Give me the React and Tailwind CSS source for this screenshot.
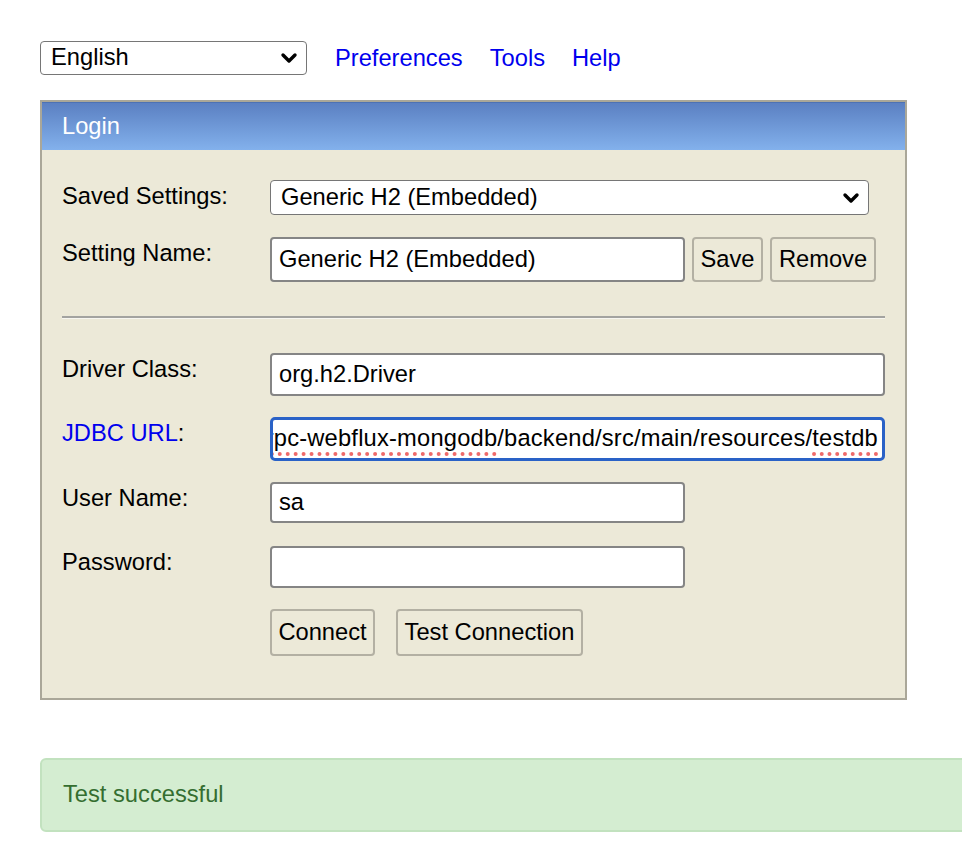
import React from "react";

const Chevron = () => (
  <svg width="18" height="12" viewBox="0 0 18 12" className="shrink-0">
    <path d="M3 3 L9 9 L15 3" fill="none" stroke="#000" strokeWidth="3.4" strokeLinecap="round" strokeLinejoin="round" />
  </svg>
);

const Select = ({ value, className }) => (
  <div
    className={`flex items-center justify-between bg-white border border-[#767676] rounded-[4px] pl-[10px] pr-[8px] ${className}`}
  >
    <span className="leading-none">{value}</span>
    <Chevron />
  </div>
);

const Input = ({ value, className }) => (
  <div
    className={`flex items-center bg-white border-2 border-[#858585] rounded-[4px] px-[7px] whitespace-nowrap overflow-hidden ${className}`}
  >
    {value}
  </div>
);

const Button = ({ children, className }) => (
  <div
    className={`flex items-center justify-center bg-[#ece9d8] border-2 border-[#b3b0a3] rounded-[4px] ${className}`}
  >
    {children}
  </div>
);

const Row = ({ label, children, className }) => (
  <div className={`flex ${className}`}>
    <div className="w-[228px] pl-[20px] pt-[3px] leading-[27px] shrink-0">{label}</div>
    <div className="flex gap-[7px]">{children}</div>
  </div>
);

export default function App() {
  return (
    <div
      className="w-[962px] h-[868px] overflow-hidden bg-white text-black text-[23.7px]"
      style={{ fontFamily: '"Liberation Sans", Arial, Helvetica, sans-serif' }}
    >
      <div className="pl-[40px] pt-[42px]">
        {/* top bar */}
        <div className="flex items-center h-[34px] -mt-[1px]">
          <Select value="English" className="w-[267px] h-[34px]" />
          <div className="flex gap-[27px] ml-[28px] pt-[2px] text-[#0000ee] leading-none">
            <span>Preferences</span>
            <span>Tools</span>
            <span>Help</span>
          </div>
        </div>

        {/* login panel */}
        <div className="mt-[25px] w-[867px] border-2 border-[#aaa799] bg-[#ece9d8]">
          <div className="h-[48px] flex items-center pl-[20px] text-white bg-linear-to-b from-[#5b80c2] to-[#83b1ec] border-t border-[#4d72b4]">
            Login
          </div>

          <div className="pt-[30px] pb-[42px]">
            <Row label="Saved Settings:">
              <Select value="Generic H2 (Embedded)" className="w-[599px] h-[35px]" />
            </Row>

            <Row label="Setting Name:" className="mt-[22px]">
              <Input value="Generic H2 (Embedded)" className="w-[415px] h-[45px]" />
              <Button className="w-[71px] h-[45px]">Save</Button>
              <Button className="w-[106px] h-[45px]">Remove</Button>
            </Row>

            <div className="mx-[20px] mt-[34px] border-t-2 border-[#a3a3a0] border-b border-b-[#f7f6f0]" />

            <Row label="Driver Class:" className="mt-[34px]">
              <Input value="org.h2.Driver" className="w-[615px] h-[43px]" />
            </Row>

            <Row
              label={
                <span>
                  <span className="text-[#0000ee]">JDBC URL</span>:
                </span>
              }
              className="mt-[21px]"
            >
              <div className="w-[615px] h-[44px] flex items-center justify-end bg-white border-[3px] border-[#2a62c7] rounded-[5px] pl-[2px] pr-[4px] whitespace-nowrap overflow-hidden tracking-[0.2px]">
                <span>
                  <span className="underline decoration-dotted decoration-[#ef6a6a] decoration-[4px] underline-offset-[6px]">
                    jdbc:h2:file:~/projects/spring-grpc-webflux-mongodb
                  </span>
                  /backend/src/main/resources/
                  <span className="underline decoration-dotted decoration-[#ef6a6a] decoration-[4px] underline-offset-[6px]">
                    testdb
                  </span>
                </span>
              </div>
            </Row>

            <Row label="User Name:" className="mt-[21px]">
              <Input value="sa" className="w-[415px] h-[41px]" />
            </Row>

            <Row label="Password:" className="mt-[23px]">
              <Input value="" className="w-[415px] h-[42px]" />
            </Row>

            <div className="flex pl-[228px] mt-[21px] gap-[21px]">
              <Button className="w-[105px] h-[47px]">Connect</Button>
              <Button className="w-[187px] h-[47px]">Test Connection</Button>
            </div>
          </div>
        </div>

        {/* result */}
        <div className="mt-[58px] w-[960px] h-[74px] flex items-center pl-[21px] bg-[#d4edd1] border-2 border-[#c2e2bf] rounded-[6px] text-[#356e30]">
          Test successful
        </div>
      </div>
    </div>
  );
}
